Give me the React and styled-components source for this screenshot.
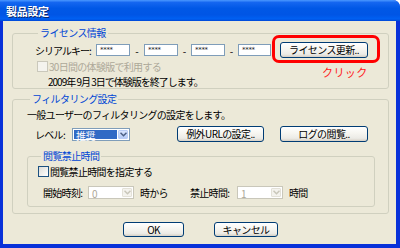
import React from "react";
import styled, { createGlobalStyle } from "styled-components";

const GlobalStyle = createGlobalStyle`
  html, body {
    margin: 0;
    padding: 0;
    background: #ffffff;
  }
  body {
    font-family: "Noto Sans CJK JP", "Liberation Sans", sans-serif;
    font-size: 10px;
  }
`;

const Window = styled.div`
  position: relative;
  width: 400px;
  height: 248px;
  box-sizing: border-box;
  background: #0831d9;
  border-top-right-radius: 7px;
  display: flex;
  flex-direction: column;
  overflow: hidden;
`;

const TitleBar = styled.div`
  height: 21px;
  flex: none;
  display: flex;
  align-items: center;
  padding-left: 6px;
  background: linear-gradient(
    #4a98ff 0%,
    #1466f0 12%,
    #0058e6 40%,
    #0055e5 70%,
    #0060f2 90%,
    #0048d6 100%
  );
`;

const Title = styled.span`
  color: #ffffff;
  font-size: 11px;
  font-weight: bold;
  letter-spacing: -0.3px;
  text-shadow: 1px 1px 0 #0a246a;
`;

const Body = styled.div`
  flex: 1;
  margin: 0 4px 4px 3px;
  background: #ece9d8;
  display: flex;
  flex-direction: column;
  padding: 0 7px 0 9px;
`;

const Group = styled.fieldset`
  margin: ${(p) => p.$mt || 0}px 0 0 0;
  padding: 0 ${(p) => p.$pr || 0}px ${(p) => p.$pb || 0}px ${(p) => p.$pl || 0}px;
  border: 1px solid #d0d0bf;
  border-radius: 3px;
  min-width: 0;
  display: flex;
  flex-direction: column;
`;

const Legend = styled.legend`
  color: #0046d5;
  font-size: 10px;
  line-height: 12px;
  height: 12px;
  padding: 0 2px;
  margin-left: 3px;
  letter-spacing: -0.6px;
`;

const Row = styled.div`
  display: flex;
  align-items: center;
  height: ${(p) => p.$h || 13}px;
  margin-top: ${(p) => p.$mt || 0}px;
  margin-left: ${(p) => p.$ml || 0}px;
`;

const Text = styled.span`
  flex: none;
  width: ${(p) => (p.$w ? p.$w + "px" : "auto")};
  margin-left: ${(p) => p.$ml || 0}px;
  color: ${(p) => (p.$disabled ? "#aca899" : "#000000")};
  letter-spacing: ${(p) => (p.$tight ? -1 : -0.7)}px;
  line-height: 11px;
  white-space: nowrap;
`;

const Sep = styled.span`
  width: ${(p) => p.$w}px;
  flex: none;
  text-align: center;
  line-height: 11px;
`;

const SerialBox = styled.div`
  flex: none;
  box-sizing: border-box;
  width: ${(p) => p.$w || 34}px;
  height: 12px;
  border: 1px solid #7f9db9;
  background: #ffffff;
  font-family: "DejaVu Sans", sans-serif;
  font-size: 7px;
  line-height: 10px;
  padding-left: 3px;
  color: #222;
  letter-spacing: -0.3px;
`;

const Button = styled.button`
  flex: none;
  box-sizing: border-box;
  width: ${(p) => p.$w}px;
  height: ${(p) => p.$h || 16}px;
  margin-left: ${(p) => p.$ml || 0}px;
  padding: 0;
  border: 1px solid #003c74;
  border-radius: 3px;
  background: linear-gradient(#ffffff 0%, #f6f5f0 45%, #ecebe6 80%, #d6d0c5 100%);
  font-family: "Noto Sans CJK JP", "Liberation Sans", sans-serif;
  font-size: 10px;
  letter-spacing: -0.6px;
  color: #000000;
  line-height: 12px;
`;

const Check = styled.span`
  flex: none;
  box-sizing: border-box;
  width: 11px;
  height: 11px;
  margin-left: ${(p) => p.$ml || 0}px;
  border: 1px solid ${(p) => (p.$disabled ? "#cac8bb" : "#1c5180")};
  background: ${(p) =>
    p.$disabled ? "#f4f3ee" : "linear-gradient(135deg, #dcdcd7, #ffffff)"};
`;

const Combo = styled.div`
  flex: none;
  box-sizing: border-box;
  width: ${(p) => p.$w}px;
  height: ${(p) => p.$h || 13}px;
  margin-left: ${(p) => p.$ml || 0}px;
  border: 1px solid ${(p) => (p.$disabled ? "#c9c7ba" : "#7f9db9")};
  background: #ffffff;
  display: flex;
  align-items: stretch;
  padding: 1px;
`;

const ComboValue = styled.span`
  flex: 1;
  padding-left: 2px;
  line-height: 11px;
  color: ${(p) => (p.$disabled ? "#aca899" : p.$selected ? "#ffffff" : "#000")};
  background: ${(p) => (p.$selected ? "#316ac5" : "transparent")};
  letter-spacing: -0.6px;
  margin-right: 1px;
`;

const ComboArrow = styled.span`
  flex: none;
  width: 10px;
  box-sizing: border-box;
  border: 1px solid ${(p) => (p.$disabled ? "#e3e1d8" : "#b9cdf6")};
  border-radius: 1px;
  background: ${(p) =>
    p.$disabled ? "#f4f3ee" : "linear-gradient(#d7e4fd, #b6cbf6)"};
  display: flex;
  align-items: center;
  justify-content: center;
`;

const Footer = styled.div`
  display: flex;
  justify-content: center;
  gap: 30px;
  margin-top: 8px;
`;

const Callout = styled.div`
  position: absolute;
  left: 272px;
  top: 35px;
  width: 108px;
  height: 28px;
  box-sizing: border-box;
  border: 3px solid #ff0000;
  border-radius: 7px;
  pointer-events: none;
`;

const ClickNote = styled.span`
  position: absolute;
  left: 322px;
  top: 65px;
  color: #ff2020;
  font-size: 11px;
  line-height: 14px;
  letter-spacing: 0.4px;
`;

const Chevron = ({ disabled }) => (
  <svg width="7" height="5" viewBox="0 0 7 5">
    <path
      d="M0.5 0.8 L3.5 3.8 L6.5 0.8"
      fill="none"
      stroke={disabled ? "#c9c7ba" : "#4d6185"}
      strokeWidth="1.5"
    />
  </svg>
);

const Select = ({ value, width, ml, disabled, selected }) => (
  <Combo $w={width} $ml={ml} $disabled={disabled}>
    <ComboValue $disabled={disabled} $selected={selected}>
      {value}
    </ComboValue>
    <ComboArrow $disabled={disabled}>
      <Chevron disabled={disabled} />
    </ComboArrow>
  </Combo>
);

export default function App() {
  return (
    <>
      <GlobalStyle />
      <Window>
        <TitleBar>
          <Title>製品設定</Title>
        </TitleBar>
        <Body>
          <Group $mt={6} $pl={22} $pr={4} $pb={0}>
            <Legend>ライセンス情報</Legend>
            <Row $h={16} $mt={3}>
              <Text $w={61} $tight>シリアルキー:</Text>
              <SerialBox>****</SerialBox>
              <Sep $w={14}>-</Sep>
              <SerialBox>****</SerialBox>
              <Sep $w={13}>-</Sep>
              <SerialBox>****</SerialBox>
              <Sep $w={13}>-</Sep>
              <SerialBox $w={33}>****</SerialBox>
              <Button $w={88} $ml={9}>ライセンス更新..</Button>
            </Row>
            <Row $mt={2}>
              <Check $ml={2} $disabled />
              <Text $ml={1} $disabled>30日間の体験版で利用する</Text>
            </Row>
            <Row $mt={2} $ml={13}>
              <Text $tight>2009年 9月 3日で体験版を終了します。</Text>
            </Row>
          </Group>

          <Group $mt={4} $pl={14} $pr={13} $pb={6}>
            <Legend>フィルタリング設定</Legend>
            <Row $h={12} $mt={3}>
              <Text>一般ユーザーのフィルタリングの設定をします。</Text>
            </Row>
            <Row $h={16} $mt={6} $ml={8}>
              <Text $w={37}>レベル:</Text>
              <Select value="推奨" width={58} selected />
              <Button $w={87} $ml={47}>例外URLの設定..</Button>
              <Button $w={88} $ml={16}>ログの閲覧..</Button>
            </Row>
            <Group $mt={8} $pl={10} $pb={7}>
              <Legend>閲覧禁止時間</Legend>
              <Row $mt={3}>
                <Check />
                <Text $ml={1}>閲覧禁止時間を指定する</Text>
              </Row>
              <Row $mt={8} $ml={5}>
                <Text $w={45}>開始時刻:</Text>
                <Select value="0" width={46} disabled />
                <Text $w={50} $ml={6}>時から</Text>
                <Text $w={47}>禁止時間:</Text>
                <Select value="1" width={46} disabled />
                <Text $ml={6}>時間</Text>
              </Row>
            </Group>
          </Group>

          <Footer>
            <Button $w={61} $h={15}>OK</Button>
            <Button $w={64} $h={15}>キャンセル</Button>
          </Footer>
        </Body>
        <Callout />
        <ClickNote>クリック</ClickNote>
      </Window>
    </>
  );
}
